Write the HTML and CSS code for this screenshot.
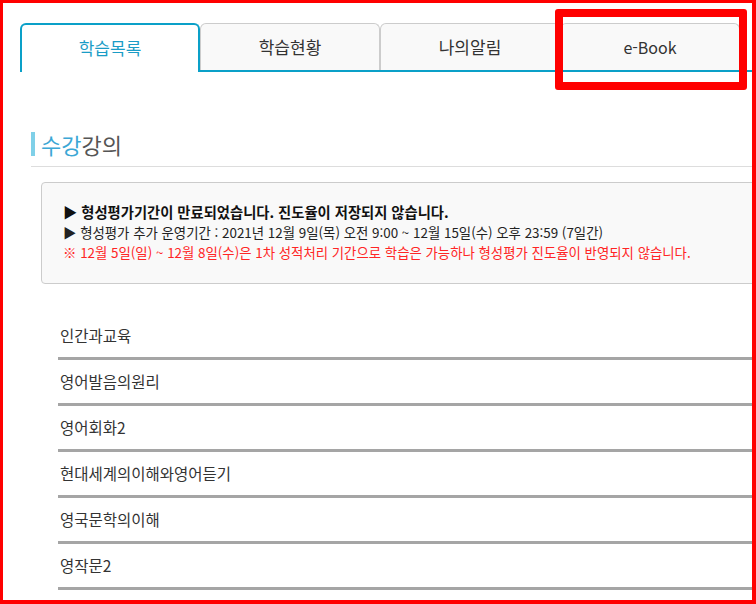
FILE: index.html
```html
<!DOCTYPE html>
<html lang="ko">
<head>
    <meta charset="UTF-8">
    <title>학습목록</title>
    <link rel="stylesheet" href="styles.css">
</head>
<body>
    <div class="frame">
        <ul class="tabs">
            <li class="tab active">학습목록</li>
            <li class="tab">학습현황</li>
            <li class="tab">나의알림</li>
            <li class="tab latin">e-Book</li>
        </ul>
        <div class="highlight"></div>

        <div class="content">
            <h2 class="title"><span class="accent">수강</span>강의</h2>

            <div class="notice">
                <p class="strong">▶ 형성평가기간이 만료되었습니다. 진도율이 저장되지 않습니다.</p>
                <p>▶ 형성평가 추가 운영기간 : 2021년 12월 9일(목) 오전 9:00 ~ 12월 15일(수) 오후 23:59 (7일간)</p>
                <p class="warn">※ 12월 5일(일) ~ 12월 8일(수)은 1차 성적처리 기간으로 학습은 가능하나 형성평가 진도율이 반영되지 않습니다.</p>
            </div>

            <ul class="courses">
                <li>인간과교육</li>
                <li>영어발음의원리</li>
                <li>영어회화2</li>
                <li>현대세계의이해와영어듣기</li>
                <li>영국문학의이해</li>
                <li>영작문2</li>
            </ul>
        </div>
    </div>
</body>
</html>
```

FILE: styles.css
```css
body {
    margin: 0;
    font-family: "Noto Sans CJK KR", "Noto Sans", sans-serif;
    color: #333;
    background-color: #fff;
}

.frame {
    position: relative;
    width: 756px;
    height: 604px;
    box-sizing: border-box;
    border: solid #ff0000;
    border-width: 3px 4px 4px 3px;
    overflow: hidden;
}

/* tabs */
.tabs {
    display: flex;
    list-style: none;
    margin: 20px -40px 0 17px;
    padding: 0;
    border-bottom: 2px solid #0aa0c8;
}

.tab {
    width: 180px;
    height: 47px;
    box-sizing: border-box;
    border: 1px solid #cccccc;
    border-bottom: none;
    border-radius: 6px 6px 0 0;
    background-color: #f9f9f9;
    text-align: center;
    line-height: 46px;
    font-size: 17px;
    color: #333;
}

.tab.latin {
    font-size: 16px;
}

.tab.active {
    height: 49px;
    margin-bottom: -2px;
    border: 2px solid #0aa0c8;
    border-bottom: none;
    background-color: #fff;
    color: #1a9cc6;
    line-height: 45px;
}

.highlight {
    position: absolute;
    left: 552px;
    top: 6px;
    width: 192px;
    height: 81px;
    box-sizing: border-box;
    border: 8px solid #ff0000;
    border-radius: 3px;
}

/* content */
.content {
    margin: 0 -30px 0 28px;
}

.title {
    margin: 60px 0 0;
    padding-bottom: 10px;
    border-bottom: 1px solid #dddddd;
    font-size: 22px;
    font-weight: normal;
    line-height: 24px;
    color: #555;
}

.title::before {
    content: "";
    display: inline-block;
    width: 4px;
    height: 24px;
    margin-right: 6px;
    vertical-align: top;
    background-color: #7fd0e8;
}

.accent {
    color: #3ba7d5;
}

.notice {
    margin: 15px 0 0 10px;
    padding: 19px 21px 21px;
    border: 1px solid #cccccc;
    border-radius: 4px;
    background-color: #f9f9f9;
}

.notice p {
    margin: 0;
    font-size: 13.4px;
    line-height: 20px;
    color: #222;
    white-space: nowrap;
}

.notice .strong {
    font-size: 14.3px;
    font-weight: bold;
    color: #111;
}

.notice .warn {
    color: #ff2525;
}

.courses {
    list-style: none;
    margin: 30px 0 0 27px;
    padding: 0;
}

.courses li {
    height: 43px;
    line-height: 43px;
    padding-left: 2px;
    border-bottom: 3px solid #a5a5a5;
    font-size: 15.5px;
    color: #333;
}
```
